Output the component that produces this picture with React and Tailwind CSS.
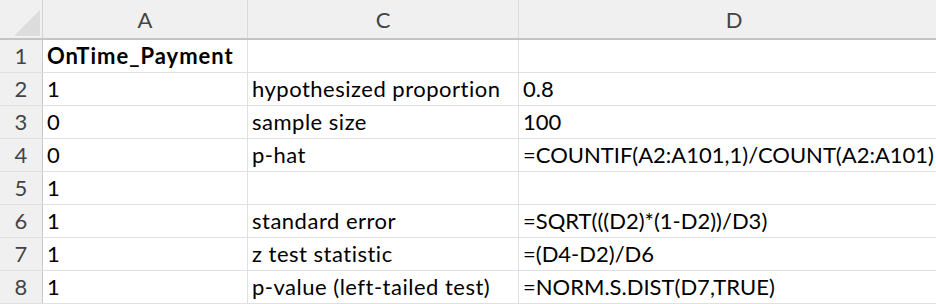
import React from "react";

const rows = [
  ["OnTime_Payment", "", ""],
  ["1", "hypothesized proportion", "0.8"],
  ["0", "sample size", "100"],
  ["0", "p-hat", "=COUNTIF(A2:A101,1)/COUNT(A2:A101)"],
  ["1", "", ""],
  ["1", "standard error", "=SQRT(((D2)*(1-D2))/D3)"],
  ["1", "z test statistic", "=(D4-D2)/D6"],
  ["1", "p-value (left-tailed test)", "=NORM.S.DIST(D7,TRUE)"],
];

export default function App() {
  return (
    <div className="w-[936px] h-[304px] overflow-hidden bg-white text-black">
      <div className="font-['Lato','Open_Sans',sans-serif] text-[22px] leading-none">
        <div className="grid grid-cols-[43px_205px_271px_430px] h-[40px] bg-[#f0f0f0] border-b-2 border-[#c4c4c4]">
          <div className="relative border-r border-[#d4d4d4]">
            <svg className="absolute left-[14px] top-[10px]" width="26" height="26" viewBox="0 0 26 26">
              <polygon points="26,0 26,26 0,26" fill="#dcdcdc" />
            </svg>
          </div>
          <div className="flex items-center justify-center border-r border-[#dadada] text-[#444] pt-[2px]">A</div>
          <div className="flex items-center justify-center border-r border-[#dadada] text-[#444] pt-[2px]">C</div>
          <div className="flex items-center justify-center text-[#444] pt-[2px]">D</div>
        </div>
        {rows.map((r, i) => (
          <div
            key={i}
            className="grid grid-cols-[43px_205px_271px_430px] h-[33px] border-b border-[#e0e0e0]"
          >
            <div className="flex items-end justify-center pb-[5px] bg-[#f0f0f0] border-r border-[#c8c8c8] text-[#444]">
              {i + 1}
            </div>
            <div
              className={
                "flex items-end pl-[4px] pb-[5px] border-r border-[#e0e0e0] whitespace-nowrap " +
                (i === 0 ? "font-bold tracking-[1px]" : "")
              }
            >
              {r[0]}
            </div>
            <div className="flex items-end pl-[4px] pb-[5px] border-r border-[#e0e0e0] whitespace-nowrap tracking-[0.5px]">
              {r[1]}
            </div>
            <div className="flex items-end pl-[4px] pb-[5px] whitespace-nowrap">
              {r[2]}
            </div>
          </div>
        ))}
      </div>
    </div>
  );
}
